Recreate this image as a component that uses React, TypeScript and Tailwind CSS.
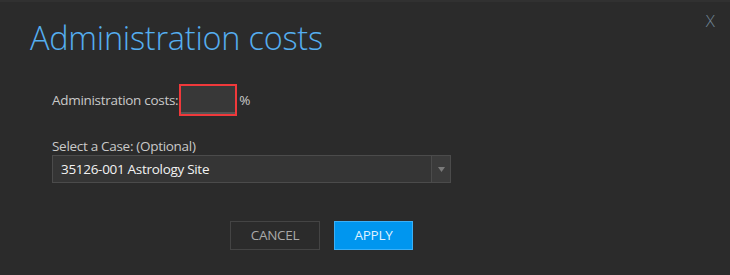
import React from "react";

export default function App() {
  return (
    <div
      className="relative w-[730px] h-[275px] bg-[#2b2b2b] overflow-hidden border-t-2 border-[#313131]"
      style={{ fontFamily: '"Open Sans", "Noto Sans", sans-serif' }}
    >
      <button className="absolute right-[15px] top-[10px] text-[17px] font-light text-[#6f8494] leading-none">
        X
      </button>
      <div className="pl-[30px] pt-[12px]">
        <h1 className="text-[32.5px] font-light text-[#55aef0] leading-[48px] tracking-[-0.25px]">
          Administration costs
        </h1>
      </div>
      <div className="pl-[52px] pt-[22px]">
        <div className="flex items-center h-[32px] text-[13.5px] text-[#c9c9c9]">
          <span className="tracking-[-0.3px]">Administration costs:</span>
          <div className="ml-[1px] w-[58px] h-[32px] border-2 border-[#f0393b] bg-[#383838] flex flex-col justify-end">
            <div className="h-[2px] bg-[#555555]" />
          </div>
          <span className="ml-[2px]">%</span>
        </div>
        <div className="mt-[21px] text-[13.5px] text-[#c9c9c9] leading-[18px] tracking-[-0.3px]">
          Select a Case: (Optional)
        </div>
        <div className="flex w-[399px] h-[28px] border border-[#4b4b4b] bg-[#353535]">
          <div className="flex-1 flex items-center pl-[8px] text-[13.5px] text-[#f2f2f2] tracking-[-0.3px]">
            35126-001 Astrology Site
          </div>
          <div className="w-[19px] border-l border-[#4b4b4b] bg-[#3b3b3b] flex items-center justify-center">
            <svg width="7" height="5" viewBox="0 0 7 5">
              <path d="M0 0 H7 L3.5 5 Z" fill="#7a7a7a" />
            </svg>
          </div>
        </div>
      </div>
      <div className="flex gap-[14px] pt-[38px] pl-[230px]">
        <button className="w-[90px] h-[29px] border border-[#444444] text-[13.5px] text-[#a9a9a9] tracking-[-0.3px]">
          CANCEL
        </button>
        <button className="w-[79px] h-[29px] border border-[#3bb0f7] bg-[#0096ef] text-[13.5px] text-[#dff1ff] tracking-[-0.3px]">
          APPLY
        </button>
      </div>
    </div>
  );
}
